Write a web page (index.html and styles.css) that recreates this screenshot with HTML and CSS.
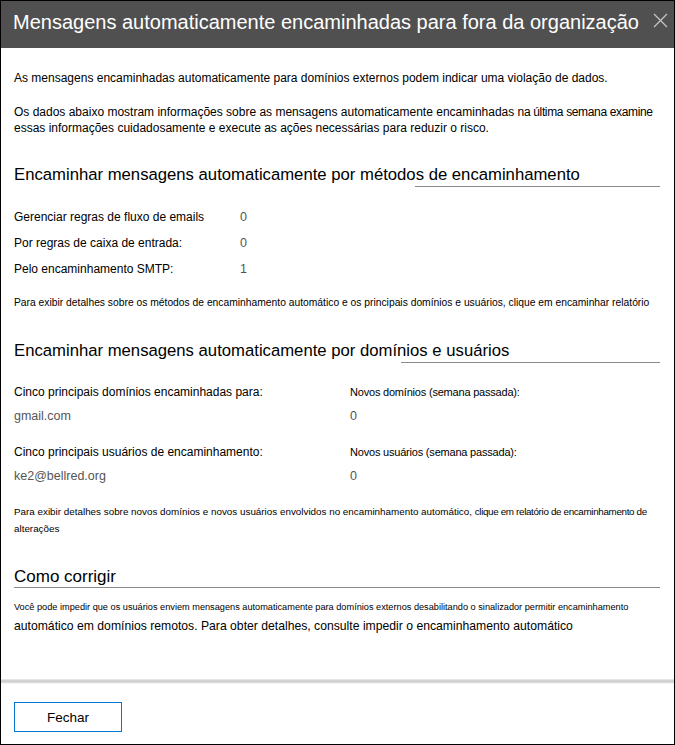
FILE: index.html
```html
<!DOCTYPE html>
<html lang="pt">
<head>
<meta charset="utf-8">
<title>Mensagens automaticamente encaminhadas</title>
<link rel="stylesheet" href="styles.css">
</head>
<body>
<div class="dialog">
  <header class="header">
    <h1 class="title">Mensagens automaticamente encaminhadas para fora da organização</h1>
    <svg class="close" width="15" height="15" viewBox="0 0 15 15" aria-hidden="true">
      <path d="M1 1 L14 14 M14 1 L1 14" stroke="#c4c4c4" stroke-width="1.3" fill="none"/>
    </svg>
  </header>
  <main class="content">
    <p class="intro intro-first">As mensagens encaminhadas automaticamente para domínios externos podem indicar uma violação de dados.</p>
    <p class="intro intro-second">Os dados abaixo mostram informações sobre as mensagens automaticamente encaminhadas <span class="tight">na última semana examine</span><br>essas informações cuidadosamente e execute as ações necessárias para reduzir o risco.</p>

    <h2 class="section-title st-1">Encaminhar mensagens automaticamente por métodos de encaminhamento</h2>
    <div class="rule rule-1"></div>

    <div class="stats">
      <div class="stat-label">Gerenciar regras de fluxo de emails</div><div class="stat-value">0</div>
      <div class="stat-label">Por regras de caixa de entrada:</div><div class="stat-value">0</div>
      <div class="stat-label">Pelo encaminhamento SMTP:</div><div class="stat-value">1</div>
    </div>
    <p class="note note-1">Para exibir detalhes sobre os métodos de encaminhamento automático e os principais domínios e usuários, clique em encaminhar relatório</p>

    <h2 class="section-title st-2">Encaminhar mensagens automaticamente por domínios e usuários</h2>
    <div class="rule rule-2"></div>

    <div class="pairs">
      <div class="pair-col">
        <div class="pair-label">Cinco principais domínios encaminhadas para:</div>
        <div class="pair-value">gmail.com</div>
        <div class="pair-label pl-2">Cinco principais usuários de encaminhamento:</div>
        <div class="pair-value">ke2@bellred.org</div>
      </div>
      <div class="pair-col pair-col-right">
        <div class="pair-label">Novos domínios (semana passada):</div>
        <div class="pair-value">0</div>
        <div class="pair-label pl-2">Novos usuários (semana passada):</div>
        <div class="pair-value">0</div>
      </div>
    </div>
    <p class="note note-2">Para exibir detalhes sobre novos domínios e novos usuários envolvidos no encaminhamento automático, <span class="tight">clique em relatório de encaminhamento de</span><br>alterações</p>

    <h2 class="section-title st-3">Como corrigir</h2>
    <div class="rule rule-3"></div>

    <p class="fix">
      <span class="fix-line-small">Você pode impedir que os usuários enviem mensagens automaticamente para domínios externos desabilitando o sinalizador permitir encaminhamento</span>
      <span class="fix-line-big">automático em domínios remotos. Para obter detalhes, consulte impedir o encaminhamento automático</span>
    </p>
  </main>
  <footer class="footer">
    <button class="btn" type="button">Fechar</button>
  </footer>
</div>
</body>
</html>
```

FILE: styles.css
```css
* { box-sizing: border-box; }
html, body { margin: 0; padding: 0; background: #fff; }
body { font-family: "Liberation Sans", Arial, sans-serif; color: #000; }

.dialog {
  width: 675px;
  height: 745px;
  border: 1px solid #000;
  display: flex;
  flex-direction: column;
  background: #fff;
}

.header {
  height: 47px;
  background: #505050;
  display: flex;
  align-items: center;
  justify-content: space-between;
  padding: 0 6px 0 12px;
  flex: none;
}
.title {
  margin: 0;
  font-weight: normal;
  font-size: 20px;
  line-height: 24px;
  color: #fff;
  white-space: nowrap;
  margin-top: -6px;
}
.close { flex: none; margin-top: -9px; }

.content {
  flex: 1;
  padding: 0 13px;
  overflow: hidden;
}

.intro {
  margin: 0;
  font-size: 12px;
  line-height: 16px;
  white-space: nowrap;
}
.intro-first { margin-top: 22px; }
.intro-second { margin-top: 18px; }
.tight { letter-spacing: -0.35px; }

.section-title {
  margin: 0;
  font-weight: normal;
  font-size: 16.7px;
  line-height: 22px;
  white-space: nowrap;
}
.st-1 { margin-top: 28px; }
.st-2 { margin-top: 30px; }
.st-3 { margin-top: 29px; font-size: 17px; }

.rule { height: 1px; background: #8a8a8a; }
.rule-1 { margin-left: 401px; margin-right: 1px; }
.rule-2 { margin-left: 387px; margin-right: 1px; }
.rule-3 { margin-left: 0; margin-right: 1px; margin-top: -1px; }

.stats {
  display: grid;
  grid-template-columns: 226px 1fr;
  row-gap: 10px;
  margin-top: 22px;
  font-size: 12px;
  line-height: 16px;
}
.stat-value { color: #555; font-size: 12.5px; }

.note {
  margin: 0;
  white-space: nowrap;
}
.note-1 { margin-top: 19px; line-height: 14px; font-size: 10.3px; }
.note-2 { margin-top: 19px; line-height: 17px; font-size: 9.85px; }

.pairs {
  display: grid;
  grid-template-columns: 336px 1fr;
  margin-top: 21px;
  font-size: 12px;
  line-height: 16px;
}
.pair-value { color: #555; margin-top: 8px; font-size: 12.5px; }
.pl-2 { margin-top: 20px; }
.pair-col-right .pair-label { font-size: 11px; letter-spacing: -0.2px; }

.fix { margin: 10px 0 0; display: flex; flex-direction: column; }
.fix-line-small { font-size: 9.2px; line-height: 18px; white-space: nowrap; }
.fix-line-big { font-size: 12.2px; line-height: 20px; white-space: nowrap; }

.footer {
  flex: none;
  height: 65px;
  padding: 23px 0 0 13px;
  background:
    linear-gradient(#eeeeee, #c9c9c9 40%, #dcdcdc 70%, #ffffff) top / 100% 5px no-repeat,
    #fff;
}

.btn {
  width: 108px;
  height: 30px;
  border: 1px solid #0078d4;
  background: #fff;
  font-family: "Liberation Sans", Arial, sans-serif;
  font-size: 13.5px;
  color: #000;
  padding: 0;
}
```
